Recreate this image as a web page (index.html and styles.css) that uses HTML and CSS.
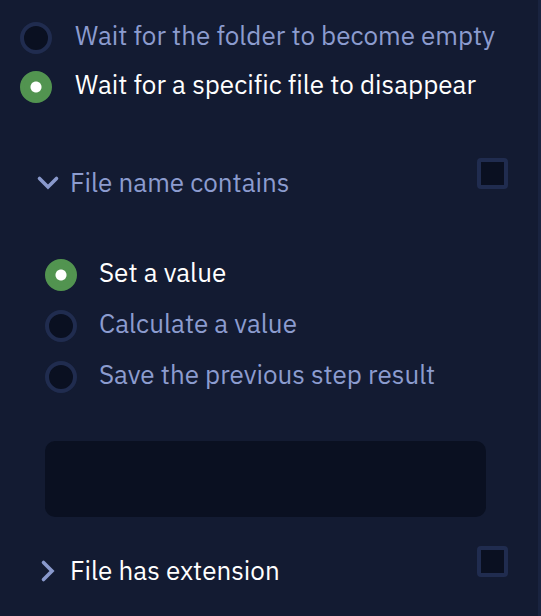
FILE: index.html
```html
<!DOCTYPE html>
<html lang="en">
<head>
<meta charset="utf-8">
<meta name="viewport" content="width=device-width, initial-scale=1">
<title>Wait for file</title>
<link rel="stylesheet" href="styles.css">
</head>
<body>
<main class="panel">
  <div class="options" role="radiogroup" aria-label="Wait mode">
    <label class="option"><input class="radio" type="radio" name="mode"><span>Wait for the folder to become empty</span></label>
    <label class="option"><input class="radio" type="radio" name="mode" checked><span>Wait for a specific file to disappear</span></label>
  </div>
  <section class="filter">
    <div class="filter-head">
      <button class="toggle" type="button" aria-expanded="true">
        <svg class="chevron" viewBox="0 0 20 20" aria-hidden="true"><path d="M1.5 6.5L10 15L18.5 6.5"/></svg>
        <span>File name contains</span>
      </button>
      <input class="check" type="checkbox" aria-label="File name contains">
    </div>
    <div class="filter-body">
      <div class="options options-roomy" role="radiogroup" aria-label="Value source">
        <label class="option"><input class="radio" type="radio" name="source" checked><span>Set a value</span></label>
        <label class="option"><input class="radio" type="radio" name="source"><span>Calculate a value</span></label>
        <label class="option"><input class="radio" type="radio" name="source"><span>Save the previous step result</span></label>
      </div>
      <input class="field" type="text" aria-label="Value">
    </div>
  </section>
  <section class="filter">
    <div class="filter-head">
      <button class="toggle toggle-strong" type="button" aria-expanded="false">
        <svg class="chevron" viewBox="0 0 20 20" aria-hidden="true"><path d="M5.5 2.5L14 11L5.5 19.5"/></svg>
        <span>File has extension</span>
      </button>
      <input class="check" type="checkbox" aria-label="File has extension">
    </div>
  </section>
</main>
</body>
</html>
```
FILE: styles.css
```css
* { box-sizing: border-box; }

body {
  margin: 0;
  background: #131b32;
  color: #8c9ccf;
  font: 26px/32px "IBM Plex Sans", "Noto Sans", sans-serif;
  font-variant-ligatures: none;
}

.panel {
  min-height: 100vh;
  padding: 13px 30px 0 20px;
  border-right: 3px solid #19233f;
}

.option {
  display: flex;
  align-items: center;
  gap: 23px;
  height: 49px;
}

.options-roomy .option {
  gap: 22px;
  height: 51px;
}

.option span { padding-bottom: 6px; }

.option:has(:checked) { color: #fff; }

.radio,
.check {
  appearance: none;
  flex: none;
  width: 31px;
  height: 31px;
  margin: 0;
  border: 4px solid #202c4f;
  background: #0a1021;
}

.radio {
  width: 32px;
  height: 32px;
  border-radius: 50%;
}

.radio:checked {
  border-color: #529450;
  background: radial-gradient(circle, #fff 5px, #529450 6px);
}

.check { border-radius: 4px; }

.filter { padding-left: 18px; }

.options + .filter { margin-top: 47px; }

.filter-head {
  display: flex;
  justify-content: space-between;
}

.toggle {
  display: flex;
  align-items: center;
  gap: 12px;
  padding: 8px 0 0;
  border: 0;
  background: none;
  color: inherit;
  font: inherit;
  font-variant-ligatures: inherit;
}

.toggle-strong { color: #fff; }

.chevron {
  width: 20px;
  height: 20px;
  overflow: visible;
  fill: none;
  stroke: #8999cc;
  stroke-width: 3.6;
  stroke-linecap: round;
}

.filter-body { padding: 51px 22px 29px 7px; }

.field {
  display: block;
  width: 100%;
  height: 76px;
  margin-top: 39px;
  padding: 0 20px;
  border: 0;
  border-radius: 10px;
  background: #0a1021;
  color: #fff;
  font: inherit;
}
```
